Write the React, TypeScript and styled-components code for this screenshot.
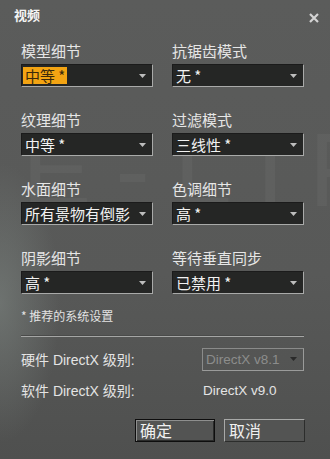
import React from "react";
import styled, { createGlobalStyle } from "styled-components";

const GlobalStyle = createGlobalStyle`
    html, body {
        margin: 0;
        padding: 0;
        background: #555655;
    }
`;

// faint background logo lives in a pseudo element, behind everything
const Window = styled.div`
    position: relative;
    width: 330px;
    height: 459px;
    overflow: hidden;
    box-sizing: border-box;
    background:
        radial-gradient(ellipse 60px 140px at 0% 66%, rgba(128, 136, 132, 0.55), rgba(128, 136, 132, 0) 100%),
        linear-gradient(180deg, #5b5c5b 0%, #585958 60%, #4f504f 100%);
    font-family: "Noto Sans CJK SC", sans-serif;
    color: #e8e8e8;

    &::before {
        content: "E-LIFE";
        position: absolute;
        left: 22px;
        top: 118px;
        font-family: "Liberation Sans", sans-serif;
        font-size: 104px;
        line-height: 1;
        letter-spacing: 24px;
        color: rgba(255, 255, 255, 0.04);
        white-space: nowrap;
        pointer-events: none;
    }
`;

const Content = styled.div`
    position: relative;
`;

const TitleBar = styled.div`
    display: flex;
    justify-content: space-between;
    align-items: flex-start;
    height: 42px;
    box-sizing: border-box;
    padding: 7px 10px 0 14px;
`;

const Title = styled.div`
    font-size: 13px;
    line-height: 16px;
    font-weight: bold;
    color: #f4f4f4;
`;

const Close = styled.div`
    width: 12px;
    height: 12px;
    margin-top: 5px;
    display: flex;
`;

const FieldGrid = styled.div`
    display: grid;
    grid-template-columns: 132px 132px;
    column-gap: 19px;
    row-gap: 24px;
    padding-left: 21px;
`;

const Field = styled.div`
    display: flex;
    flex-direction: column;
`;

const Label = styled.div`
    font-size: 15px;
    line-height: 18px;
    margin-bottom: 4px;
    color: #e6e6e6;
    white-space: nowrap;
`;

const SelectBox = styled.div<{ $disabled?: boolean }>`
    display: flex;
    align-items: center;
    justify-content: space-between;
    height: 23px;
    box-sizing: border-box;
    padding: 0 6px 0 1px;
    background: ${(p) => (p.$disabled ? "transparent" : "#252625")};
    border-top: 1px solid ${(p) => (p.$disabled ? "#8a8b8a" : "#1b1b1b")};
    border-left: 1px solid ${(p) => (p.$disabled ? "#8a8b8a" : "#1b1b1b")};
    border-bottom: 1px solid ${(p) => (p.$disabled ? "#9a9b9a" : "#a9aaa9")};
    border-right: 1px solid ${(p) => (p.$disabled ? "#9a9b9a" : "#a9aaa9")};
`;

const Value = styled.span<{ $selected?: boolean; $disabled?: boolean }>`
    font-size: ${(p) => (p.$disabled ? "13.5px" : "15px")};
    font-family: ${(p) =>
        p.$disabled ? `"Liberation Sans", sans-serif` : `"Noto Sans CJK SC", sans-serif`};
    line-height: 17px;
    padding: 0 2px;
    white-space: nowrap;
    color: ${(p) => (p.$selected ? "#3b2a0c" : p.$disabled ? "#8c8d8c" : "#f2f2f2")};
    background: ${(p) => (p.$selected ? "#f3a413" : "transparent")};
`;

const Note = styled.div`
    margin: 14px 0 0 21px;
    font-size: 12px;
    line-height: 16px;
    color: #e2e2e2;
`;

const Divider = styled.div`
    margin: 11px 26px 0 21px;
    height: 1px;
    border-top: 1px solid #4a4b4a;
    background: #a5a6a5;
`;

const DxGrid = styled.div`
    display: grid;
    grid-template-columns: 181px 102px;
    grid-auto-rows: 24px;
    row-gap: 7px;
    align-items: center;
    margin-top: 10px;
    padding-left: 21px;
    font-family: "Liberation Sans", "Noto Sans CJK SC", sans-serif;
    font-size: 14px;
    color: #e4e4e4;
`;

const DxLabel = styled.div`
    white-space: nowrap;
`;

const DxValue = styled.div`
    padding-left: 1px;
    font-size: 13.5px;
    white-space: nowrap;
`;

const ButtonRow = styled.div`
    display: flex;
    justify-content: flex-end;
    gap: 9px;
    margin-top: 17px;
    padding-right: 25px;
`;

const Button = styled.div<{ $default?: boolean }>`
    width: ${(p) => (p.$default ? "80px" : "81px")};
    height: 23px;
    box-sizing: border-box;
    padding-left: 4px;
    font-size: 16px;
    line-height: 20px;
    color: #f0f0f0;
    background: #535453;
    border: 1px solid;
    border-color: ${(p) =>
        p.$default ? "#0e0e0e" : "#a8a9a8 #2c2d2c #2c2d2c #a8a9a8"};
    box-shadow: ${(p) =>
        p.$default ? "inset 1px 1px 0 #8e8f8e, inset -1px -1px 0 #2a2b2a" : "none"};
`;

const Arrow = ({ color = "#bdbdbd" }: { color?: string }) => (
    <svg width="7" height="4" viewBox="0 0 7 4">
        <polygon points="0,0 7,0 3.5,4" fill={color} />
    </svg>
);

const fields = [
    { label: "模型细节", value: "中等 *", selected: true },
    { label: "抗锯齿模式", value: "无 *" },
    { label: "纹理细节", value: "中等 *" },
    { label: "过滤模式", value: "三线性 *" },
    { label: "水面细节", value: "所有景物有倒影" },
    { label: "色调细节", value: "高 *" },
    { label: "阴影细节", value: "高 *" },
    { label: "等待垂直同步", value: "已禁用 *" },
];

const App: React.FC = () => {
    return (
        <>
            <GlobalStyle />
            <Window>
                <Content>
                    <TitleBar>
                        <Title>视频</Title>
                        <Close>
                            <svg width="12" height="12" viewBox="0 0 12 12">
                                <path d="M2 2 L10 10 M10 2 L2 10" stroke="#d4d4d4" strokeWidth="2.2" />
                            </svg>
                        </Close>
                    </TitleBar>

                    <FieldGrid>
                        {fields.map((f) => (
                            <Field key={f.label}>
                                <Label>{f.label}</Label>
                                <SelectBox>
                                    <Value $selected={f.selected}>{f.value}</Value>
                                    <Arrow />
                                </SelectBox>
                            </Field>
                        ))}
                    </FieldGrid>

                    <Note>* 推荐的系统设置</Note>
                    <Divider />

                    <DxGrid>
                        <DxLabel>硬件 DirectX 级别:</DxLabel>
                        <SelectBox $disabled>
                            <Value $disabled>DirectX v8.1</Value>
                            <Arrow color="#2a2a2a" />
                        </SelectBox>
                        <DxLabel>软件 DirectX 级别:</DxLabel>
                        <DxValue>DirectX v9.0</DxValue>
                    </DxGrid>

                    <ButtonRow>
                        <Button $default>确定</Button>
                        <Button>取消</Button>
                    </ButtonRow>
                </Content>
            </Window>
        </>
    );
};

export default App;
